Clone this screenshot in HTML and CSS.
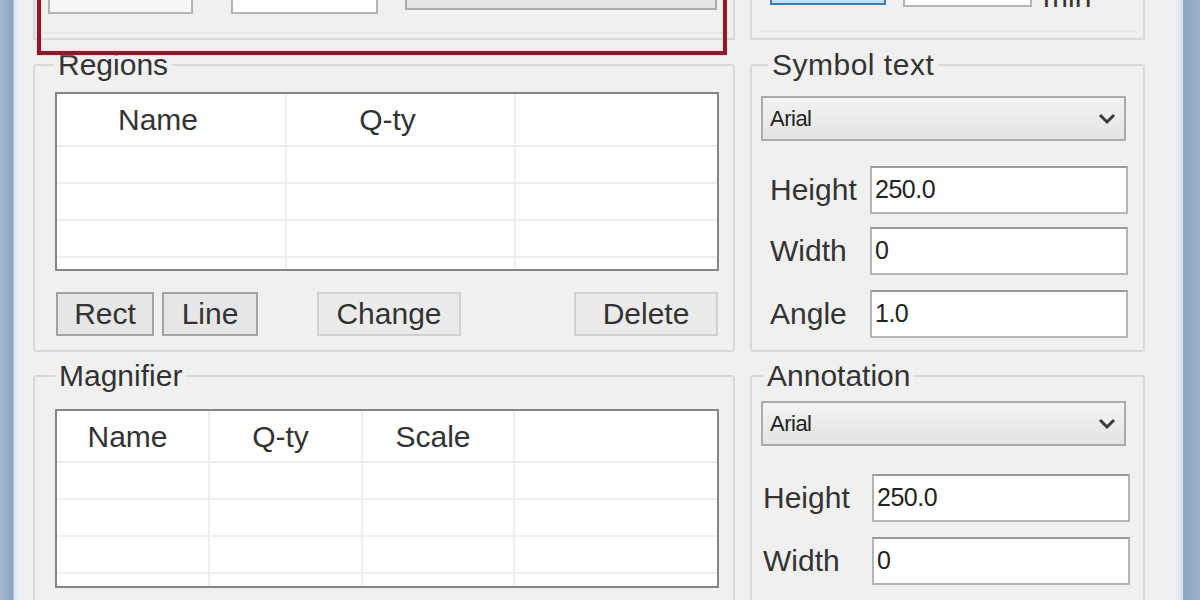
FILE: index.html
```html
<!DOCTYPE html>
<html>
<head lang="en">
    <meta charset="UTF-8">
    <title>Layer settings</title>
    <link rel="stylesheet" href="styles.css">
</head>
<body>
<div id="screen">
    <div class="frame-left"></div>
    <div id="dialog">
        <!-- groups cut off by the top of the picture -->
        <div class="top-group">
            <div class="ctrl-row left-row">
                <div class="field field-grey f1"></div>
                <div class="field f2"></div>
                <div class="combo combo-top"></div>
            </div>
            <div class="sep"></div>
        </div>
        <div class="top-group">
            <div class="ctrl-row right-row">
                <div class="btn-blue"></div>
                <div class="field f3"></div>
                <span class="unit">min</span>
            </div>
            <div class="sep sep-right"></div>
        </div>

        <fieldset class="group">
            <legend class="lg-regions">Regions</legend>
            <div class="list">
                <div class="col" style="width:230px"><div class="head head-r">Name</div><div class="rows"></div></div>
                <div class="col" style="width:229px"><div class="head head-r">Q-ty</div><div class="rows"></div></div>
                <div class="col col-last"><div class="head"></div><div class="rows"></div></div>
            </div>
            <div class="btn-row">
                <div class="btn btn-dark b-rect">Rect</div>
                <div class="btn btn-dark b-line">Line</div>
                <div class="btn b-change">Change</div>
                <div class="btn b-delete">Delete</div>
            </div>
        </fieldset>

        <fieldset class="group group-symbol">
            <legend class="lg-symbol">Symbol text</legend>
            <div class="combo combo-font">
                <span>Arial</span>
                <svg width="18" height="14" viewBox="0 0 18 14"><path d="M2 3 L9 10 L16 3" fill="none" stroke="#3a3a3a" stroke-width="3"/></svg>
            </div>
            <div class="prop first">
                <label>Height</label>
                <div class="field val">250.0</div>
            </div>
            <div class="prop p13">
                <label>Width</label>
                <div class="field val">0</div>
            </div>
            <div class="prop p15">
                <label>Angle</label>
                <div class="field val">1.0</div>
            </div>
        </fieldset>

        <fieldset class="group group-low">
            <legend class="lg-magnifier">Magnifier</legend>
            <div class="list list-mag">
                <div class="col" style="width:153px"><div class="head head-m">Name</div><div class="rows"></div></div>
                <div class="col" style="width:153px"><div class="head head-m">Q-ty</div><div class="rows"></div></div>
                <div class="col" style="width:152px"><div class="head head-m">Scale</div><div class="rows"></div></div>
                <div class="col col-last"><div class="head"></div><div class="rows"></div></div>
            </div>
        </fieldset>

        <fieldset class="group group-low">
            <legend class="lg-annot">Annotation</legend>
            <div class="combo combo-font combo-annot">
                <span>Arial</span>
                <svg width="18" height="14" viewBox="0 0 18 14"><path d="M2 3 L9 10 L16 3" fill="none" stroke="#3a3a3a" stroke-width="3"/></svg>
            </div>
            <div class="prop prop-annot first-annot">
                <label>Height</label>
                <div class="field val">250.0</div>
            </div>
            <div class="prop prop-annot p15">
                <label>Width</label>
                <div class="field val">0</div>
            </div>
        </fieldset>
    </div>
    <div class="frame-right"></div>

    <!-- red highlight drawn over the dialog -->
    <div class="mark"></div>
</div>
</body>
</html>
```

FILE: styles.css
```css
* {
    margin: 0;
    padding: 0;
    box-sizing: border-box;
}
body {
    font-family: "Liberation Sans", Arial, sans-serif;
    color: #333;
    background: #f0f0f0;
}
#screen {
    position: relative;
    display: flex;
    width: 1200px;
    height: 600px;
    overflow: hidden;
}
.frame-left {
    width: 18px;
    background: linear-gradient(to right, #a5b9cc 0, #89a3bb 13px, #d6e3ec 14px, #eaf1f6 18px);
}
.frame-right {
    width: 25px;
    background: linear-gradient(to right, #eaf0f4 0, #d4e1ea 8px, #8aa5bc 8px, #9bb3c7 25px);
}
#dialog {
    flex: 1;
    background: #f0f0f0;
    display: grid;
    grid-template-columns: 702px 395px;
    grid-template-rows: 91px auto auto;
    align-content: start;
    column-gap: 15px;
    row-gap: 9px;
    padding-left: 15px;
    margin-top: -50px;
}

/* top groups (partly off screen) */
.top-group {
    border: 2px solid #dadada;
    border-top: none;
    height: 90px;
}
.ctrl-row {
    display: flex;
    align-items: flex-end;
}
.left-row {
    height: 64px;
}
.right-row {
    height: 57px;
}
.sep {
    margin-top: 18px;
    border-top: 2px solid #e6e6e6;
    margin-left: 8px;
    margin-right: 8px;
}
.sep-right {
    margin-top: 23px;
}
.field {
    background: #fff;
    border: 2px solid #b4b4b4;
    border-top-color: #9a9a9a;
}
.field-grey {
    background: #f6f6f6;
}
.f1 {
    margin-left: 13px;
    width: 145px;
    height: 44px;
}
.f2 {
    margin-left: 38px;
    width: 147px;
    height: 44px;
}
.combo {
    background: linear-gradient(#f3f3f3, #e4e4e4);
    border: 2px solid #ababab;
}
.combo-top {
    margin-left: 27px;
    width: 312px;
    height: 40px;
    margin-bottom: 4px;
}
.btn-blue {
    margin-left: 18px;
    width: 116px;
    height: 40px;
    margin-bottom: 2px;
    background: linear-gradient(#d9ecfb, #c3e0f7);
    border: 2px solid #3c7cae;
}
.f3 {
    margin-left: 17px;
    width: 129px;
    height: 44px;
}
.unit {
    margin-left: 11px;
    font-size: 30px;
    line-height: 30px;
    margin-bottom: -5px;
}

/* group boxes */
.group {
    border: 2px solid #d9d9d9;
    border-radius: 3px;
    min-width: 0;
}
.group-low {
    padding-bottom: 40px;
}
.group legend {
    font-size: 30px;
    line-height: 30px;
    padding: 0 4px;
    color: #333;
}
.lg-regions {
    margin-left: 19px;
}
.lg-magnifier {
    margin-left: 20px;
}
.lg-symbol {
    margin-left: 16px;
    letter-spacing: 0.5px;
}
.lg-annot {
    margin-left: 11px;
}

/* list views */
.list {
    display: flex;
    margin: 12px 0 0 20px;
    width: 664px;
    height: 179px;
    border: 2px solid #858585;
    background: #fff;
    overflow: hidden;
}
.list-mag {
    margin-top: 18px;
}
.col {
    display: flex;
    flex-direction: column;
    border-right: 2px solid #eeeeee;
}
.col-last {
    flex: 1;
    border-right: none;
}
.head {
    height: 53px;
    border-bottom: 2px solid #ececec;
    font-size: 30px;
    line-height: 52px;
    text-align: center;
}
.head-r {
    padding-right: 26px;
}
.head-m {
    padding-right: 10px;
}
.list-mag .head {
    height: 52px;
}
.rows {
    flex: 1;
    background: repeating-linear-gradient(#fff 0, #fff 35px, #eeeeee 35px, #eeeeee 37px);
}

/* buttons */
.btn-row {
    display: flex;
    margin-top: 21px;
    margin-bottom: 14px;
}
.btn {
    height: 44px;
    font-size: 30px;
    line-height: 40px;
    text-align: center;
    background: #ebebeb;
    border: 2px solid #d2d2d2;
    color: #333;
}
.btn-dark {
    background: #e6e6e6;
    border-color: #a3a3a3;
}
.b-rect {
    margin-left: 21px;
    width: 98px;
}
.b-line {
    margin-left: 8px;
    width: 96px;
}
.b-change {
    margin-left: 59px;
    width: 144px;
}
.b-delete {
    margin-left: 113px;
    width: 144px;
}

/* font boxes */
.combo-font {
    display: flex;
    align-items: center;
    justify-content: space-between;
    margin: 16px 0 0 9px;
    width: 365px;
    height: 45px;
    padding: 0 8px 0 7px;
    font-size: 22px;
    letter-spacing: -0.5px;
    color: #222;
}
.combo-annot {
    margin-top: 10px;
}
.prop {
    display: flex;
    align-items: center;
    margin-left: 18px;
}
.prop label {
    width: 100px;
    font-size: 30px;
}
.prop-annot {
    margin-left: 11px;
}
.prop-annot label {
    width: 109px;
}
.first {
    margin-top: 25px;
}
.first-annot {
    margin-top: 28px;
}
.p13 {
    margin-top: 13px;
}
.p15 {
    margin-top: 15px;
}
.val {
    width: 258px;
    height: 48px;
    padding-left: 3px;
    font-size: 25px;
    line-height: 42px;
    letter-spacing: -0.5px;
    color: #222;
}
.group-symbol {
    padding-bottom: 12px;
}

/* red highlight frame */
.mark {
    position: absolute;
    left: 37px;
    top: -20px;
    width: 690px;
    height: 75px;
    border: 4px solid #8b1b2b;
    box-shadow: 0 0 2px #f2b3b3, inset 0 0 2px #f2b3b3;
}
```
